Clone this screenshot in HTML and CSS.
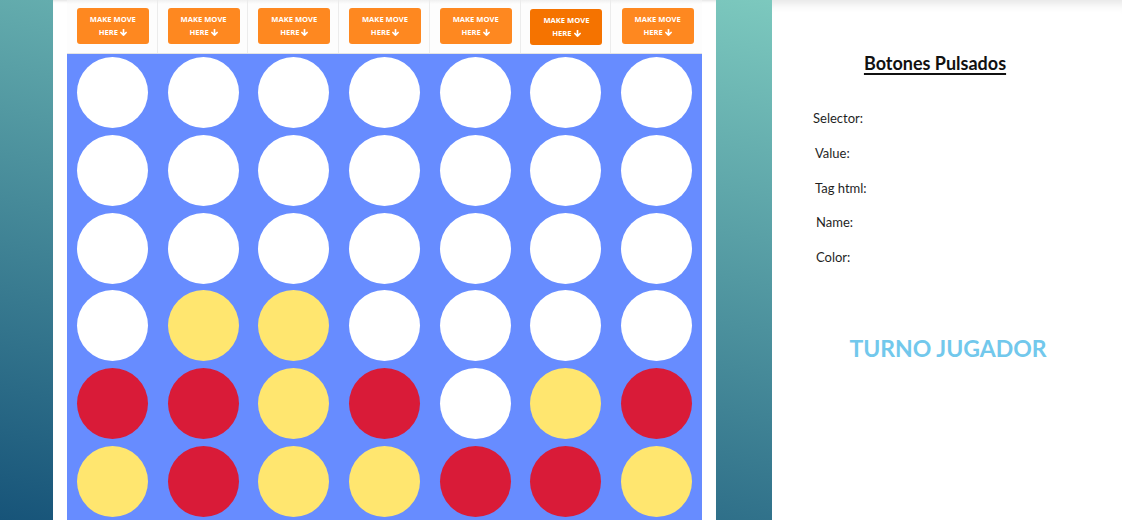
FILE: index.html
```html
<!DOCTYPE html>
<html lang="es">
<head>
<meta charset="utf-8">
<title>Conecta 4</title>
<link rel="stylesheet" href="styles.css">
</head>
<body>
<div class="page">
  <div class="gutter-left"></div>
  <main class="game">
    <div class="controls">
      <div class="ctl"><button class="move">MAKE MOVE<br>HERE <svg class="arr" viewBox="0 0 8 8"><path d="M4 0.5V7M1 4l3 3 3-3" /></svg></button></div>
      <div class="ctl"><button class="move">MAKE MOVE<br>HERE <svg class="arr" viewBox="0 0 8 8"><path d="M4 0.5V7M1 4l3 3 3-3" /></svg></button></div>
      <div class="ctl"><button class="move">MAKE MOVE<br>HERE <svg class="arr" viewBox="0 0 8 8"><path d="M4 0.5V7M1 4l3 3 3-3" /></svg></button></div>
      <div class="ctl"><button class="move">MAKE MOVE<br>HERE <svg class="arr" viewBox="0 0 8 8"><path d="M4 0.5V7M1 4l3 3 3-3" /></svg></button></div>
      <div class="ctl"><button class="move">MAKE MOVE<br>HERE <svg class="arr" viewBox="0 0 8 8"><path d="M4 0.5V7M1 4l3 3 3-3" /></svg></button></div>
      <div class="ctl"><button class="move hover">MAKE MOVE<br>HERE <svg class="arr" viewBox="0 0 8 8"><path d="M4 0.5V7M1 4l3 3 3-3" /></svg></button></div>
      <div class="ctl last"><button class="move">MAKE MOVE<br>HERE <svg class="arr" viewBox="0 0 8 8"><path d="M4 0.5V7M1 4l3 3 3-3" /></svg></button></div>
    </div>
    <div class="board">
      <div class="cell"><span class="disc w"></span></div><div class="cell"><span class="disc w"></span></div><div class="cell"><span class="disc w"></span></div><div class="cell"><span class="disc w"></span></div><div class="cell"><span class="disc w"></span></div><div class="cell"><span class="disc w"></span></div><div class="cell"><span class="disc w"></span></div>
      <div class="cell"><span class="disc w"></span></div><div class="cell"><span class="disc w"></span></div><div class="cell"><span class="disc w"></span></div><div class="cell"><span class="disc w"></span></div><div class="cell"><span class="disc w"></span></div><div class="cell"><span class="disc w"></span></div><div class="cell"><span class="disc w"></span></div>
      <div class="cell"><span class="disc w"></span></div><div class="cell"><span class="disc w"></span></div><div class="cell"><span class="disc w"></span></div><div class="cell"><span class="disc w"></span></div><div class="cell"><span class="disc w"></span></div><div class="cell"><span class="disc w"></span></div><div class="cell"><span class="disc w"></span></div>
      <div class="cell"><span class="disc w"></span></div><div class="cell"><span class="disc y"></span></div><div class="cell"><span class="disc y"></span></div><div class="cell"><span class="disc w"></span></div><div class="cell"><span class="disc w"></span></div><div class="cell"><span class="disc w"></span></div><div class="cell"><span class="disc w"></span></div>
      <div class="cell"><span class="disc r"></span></div><div class="cell"><span class="disc r"></span></div><div class="cell"><span class="disc y"></span></div><div class="cell"><span class="disc r"></span></div><div class="cell"><span class="disc w"></span></div><div class="cell"><span class="disc y"></span></div><div class="cell"><span class="disc r"></span></div>
      <div class="cell"><span class="disc y"></span></div><div class="cell"><span class="disc r"></span></div><div class="cell"><span class="disc y"></span></div><div class="cell"><span class="disc y"></span></div><div class="cell"><span class="disc r"></span></div><div class="cell"><span class="disc r"></span></div><div class="cell"><span class="disc y"></span></div>
    </div>
  </main>
  <div class="gutter-mid"></div>
  <aside class="info">
    <h2 class="info-title">Botones Pulsados</h2>
    <ul class="fields">
      <li class="field f1">Selector:</li>
      <li class="field">Value:</li>
      <li class="field">Tag html:</li>
      <li class="field f4">Name:</li>
      <li class="field f4">Color:</li>
    </ul>
    <p class="turn">TURNO JUGADOR</p>
  </aside>
</div>
</body>
</html>
```

FILE: styles.css
```css
html, body {
  margin: 0;
  padding: 0;
  height: 100%;
}
body {
  background: linear-gradient(13deg, #175479 0%, #88d6c6 100%);
  overflow: hidden;
  font-family: "Open Sans", "DejaVu Sans", sans-serif;
}
.page {
  display: flex;
  height: 520px;
  width: 1122px;
}
.gutter-left {
  width: 53px;
  flex: none;
}
.game {
  width: 635px;
  flex: none;
  background: #fff;
  padding: 0 14px;
  box-shadow: inset 0 3px 3px -2px rgba(0,0,0,0.12);
  display: flex;
  flex-direction: column;
}
.controls {
  display: grid;
  grid-template-columns: repeat(7, 1fr);
  height: 54px;
  flex: none;
  border-bottom: 1px solid #e4e4e4;
  box-sizing: border-box;
}
.ctl {
  border-right: 1px solid #ececec;
  display: flex;
  justify-content: center;
  padding-top: 8px;
  background: linear-gradient(#f0f0f0 0, #fdfdfd 4px, #fdfdfd 100%);
}
.ctl.last {
  border-right: none;
}
.move {
  width: 72px;
  height: 36px;
  border: none;
  border-radius: 3px;
  background: #fe8820;
  color: #fff;
  font-family: "Open Sans", "DejaVu Sans", sans-serif;
  font-weight: 700;
  font-size: 7.6px;
  line-height: 13px;
  padding: 0;
  margin-left: 2px;
  text-align: center;
  display: block;
}
.move.hover {
  background: #f57300;
  margin-top: 1px;
}
.arr {
  width: 7px;
  height: 7px;
  vertical-align: -0.5px;
  fill: none;
  stroke: #fff;
  stroke-width: 1.9;
  stroke-linecap: round;
  stroke-linejoin: round;
}
.board {
  flex: 1;
  background: #678cff;
  display: grid;
  grid-template-columns: repeat(7, 1fr);
  grid-template-rows: repeat(6, 1fr);
}
.cell {
  display: flex;
  align-items: center;
  justify-content: center;
}
.disc {
  width: 71px;
  height: 71px;
  border-radius: 50%;
  display: block;
}
.disc.w { background: #ffffff; }
.disc.y { background: #ffe66f; }
.disc.r { background: #d91b38; }
.gutter-mid {
  width: 56px;
  flex: none;
}
.info {
  flex: 1;
  background: #fff;
  box-shadow: inset 0 12px 10px -8px rgba(0,0,0,0.10);
  font-family: Lato, "Open Sans", sans-serif;
  color: #1f1f1f;
}
.info-title {
  margin: 51px 0 0;
  padding-right: 24px;
  text-align: center;
  font-size: 18px;
  font-weight: 700;
  line-height: 24px;
  text-decoration: underline;
  text-decoration-thickness: 1.5px;
  text-underline-offset: 3px;
  color: #111;
}
.fields {
  list-style: none;
  margin: 35px 0 0;
  padding: 0 0 0 43px;
}
.field {
  font-size: 13px;
  line-height: 16px;
  height: 16px;
  margin-bottom: 18.75px;
}
.field.f1 {
  margin-left: -2px;
}
.field.f4 {
  margin-left: 1px;
}
.turn {
  margin: 69px 0 0;
  padding-left: 2px;
  text-align: center;
  font-size: 23px;
  font-weight: 700;
  color: #72c8ec;
  line-height: 28px;
}
```
